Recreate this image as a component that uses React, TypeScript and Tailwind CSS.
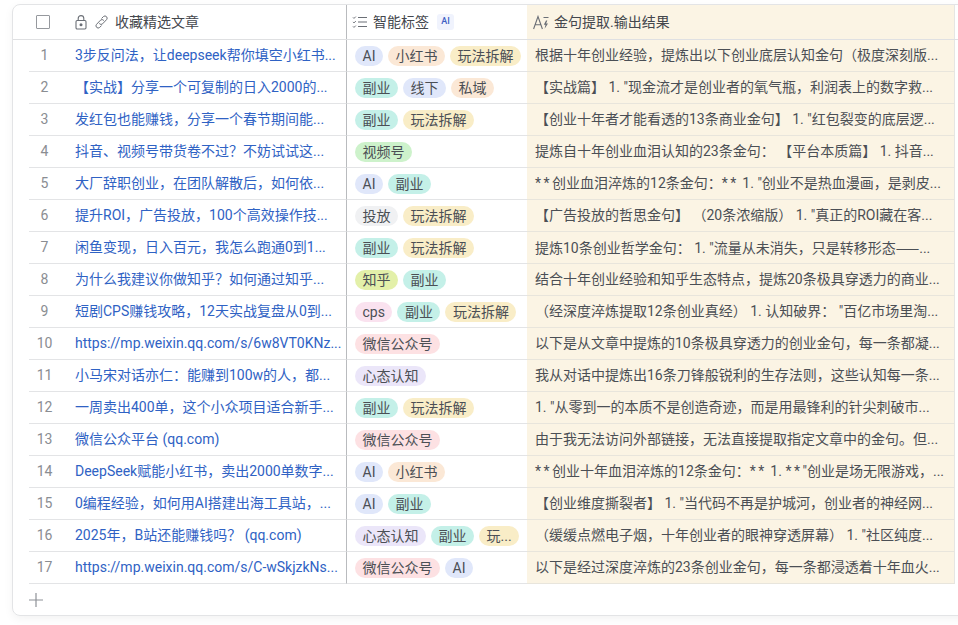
import React from "react";

type Tag = "AI" | "小红书" | "玩法拆解" | "副业" | "线下" | "私域" | "视频号" | "投放" | "知乎" | "cps" | "微信公众号" | "心态认知" | "玩...";

const tagColors: Record<Tag, string> = {
  AI: "bg-[#e0e7fa]",
  小红书: "bg-[#fbe8d6]",
  玩法拆解: "bg-[#f9edc7]",
  "玩...": "bg-[#f9edc7]",
  副业: "bg-[#c4f0e8]",
  线下: "bg-[#e0e7fa]",
  私域: "bg-[#fbe8d6]",
  视频号: "bg-[#cdf2cb]",
  投放: "bg-[#f0f1f3]",
  知乎: "bg-[#e3f0a9]",
  cps: "bg-[#fae2ef]",
  微信公众号: "bg-[#fde1e3]",
  心态认知: "bg-[#ebe6f9]",
};

const rows: { title: string; tags: Tag[]; result: string }[] = [
  { title: "3步反问法，让deepseek帮你填空小红书...", tags: ["AI", "小红书", "玩法拆解"], result: "根据十年创业经验，提炼出以下创业底层认知金句（极度深刻版..." },
  { title: "【实战】分享一个可复制的日入2000的...", tags: ["副业", "线下", "私域"], result: "【实战篇】 1. \"现金流才是创业者的氧气瓶，利润表上的数字救..." },
  { title: "发红包也能赚钱，分享一个春节期间能...", tags: ["副业", "玩法拆解"], result: "【创业十年者才能看透的13条商业金句】 1. \"红包裂变的底层逻..." },
  { title: "抖音、视频号带货卷不过？不妨试试这...", tags: ["视频号"], result: "提炼自十年创业血泪认知的23条金句： 【平台本质篇】 1. 抖音..." },
  { title: "大厂辞职创业，在团队解散后，如何依...", tags: ["AI", "副业"], result: "**创业血泪淬炼的12条金句：** 1. \"创业不是热血漫画，是剥皮..." },
  { title: "提升ROI，广告投放，100个高效操作技...", tags: ["投放", "玩法拆解"], result: "【广告投放的哲思金句】 （20条浓缩版） 1. \"真正的ROI藏在客..." },
  { title: "闲鱼变现，日入百元，我怎么跑通0到1...", tags: ["副业", "玩法拆解"], result: "提炼10条创业哲学金句： 1. \"流量从未消失，只是转移形态——..." },
  { title: "为什么我建议你做知乎？如何通过知乎...", tags: ["知乎", "副业"], result: "结合十年创业经验和知乎生态特点，提炼20条极具穿透力的商业..." },
  { title: "短剧CPS赚钱攻略，12天实战复盘从0到...", tags: ["cps", "副业", "玩法拆解"], result: "（经深度淬炼提取12条创业真经） 1. 认知破界： \"百亿市场里淘..." },
  { title: "https://mp.weixin.qq.com/s/6w8VT0KNz...", tags: ["微信公众号"], result: "以下是从文章中提炼的10条极具穿透力的创业金句，每一条都凝..." },
  { title: "小马宋对话亦仁：能赚到100w的人，都...", tags: ["心态认知"], result: "我从对话中提炼出16条刀锋般锐利的生存法则，这些认知每一条..." },
  { title: "一周卖出400单，这个小众项目适合新手...", tags: ["副业", "玩法拆解"], result: "1. \"从零到一的本质不是创造奇迹，而是用最锋利的针尖刺破市..." },
  { title: "微信公众平台 (qq.com)", tags: ["微信公众号"], result: "由于我无法访问外部链接，无法直接提取指定文章中的金句。但..." },
  { title: "DeepSeek赋能小红书，卖出2000单数字...", tags: ["AI", "小红书"], result: "**创业十年血泪淬炼的12条金句：** 1. **\"创业是场无限游戏，..." },
  { title: "0编程经验，如何用AI搭建出海工具站，...", tags: ["AI", "副业"], result: "【创业维度撕裂者】 1. \"当代码不再是护城河，创业者的神经网..." },
  { title: "2025年，B站还能赚钱吗？ (qq.com)", tags: ["心态认知", "副业", "玩..."], result: "（缓缓点燃电子烟，十年创业者的眼神穿透屏幕） 1. \"社区纯度..." },
  { title: "https://mp.weixin.qq.com/s/C-wSkjzkNs...", tags: ["微信公众号", "AI"], result: "以下是经过深度淬炼的23条创业金句，每一条都浸透着十年血火..." },
];

const LockIcon = () => (
  <svg width="12" height="15" viewBox="0 0 12 15" fill="none" stroke="#6b6f76" strokeWidth="1.1">
    <rect x="1" y="5.5" width="10" height="8.5" rx="1.2" />
    <path d="M3.2 5.5V3.4a2.8 2.8 0 0 1 5.6 0v2.1" />
    <circle cx="6" cy="9.7" r="1.5" fill="#6b6f76" stroke="none" />
  </svg>
);

const LinkIcon = () => (
  <svg width="13" height="14" viewBox="0 0 13 14" fill="none" stroke="#6b6f76" strokeWidth="1" strokeLinecap="round">
    <path d="M6.8 3.2l1.7-1.7a2.2 2.2 0 0 1 3.1 3.1L7.6 8.8a2.2 2.2 0 0 1-3.1 0" />
    <path d="M6.3 10.8l-1.7 1.7a2.2 2.2 0 0 1-3.1-3.1l4-4.2a2.2 2.2 0 0 1 3.1 0" />
  </svg>
);

const ListIcon = () => (
  <svg width="15" height="14" viewBox="0 0 15 14" fill="none" stroke="#6b6f76" strokeWidth="1.1">
    <path d="M6 2.5h9M6 7h9M6 11.5h9" />
    <path d="M1 2.4l1 1 1.8-1.8M1 6.9l1 1 1.8-1.8M1 11.4l1 1 1.8-1.8" strokeWidth="1" />
  </svg>
);

const AiTextIcon = () => (
  <svg width="16" height="15" viewBox="0 0 16 15" fill="none" stroke="#6b6f76" strokeWidth="1.1">
    <path d="M0.6 14L5 1.5 9.4 14M2.2 9.8h5.6" />
    <path d="M10.5 2.5h5" />
    <path d="M13 5.5l-2.2 4.3h1.7l-.9 4 3.4-5.2h-1.9l1.2-3.1z" fill="#6b6f76" stroke="none" />
  </svg>
);

const Pill = ({ tag }: { tag: Tag }) => (
  <span className={`${tagColors[tag]} h-5 leading-5 px-[7.5px] rounded-full text-[#4b4f55] whitespace-nowrap shrink-0`}>
    {tag}
  </span>
);

// the asterisks and dashes sit wider in the original font
const ResultText = ({ text }: { text: string }) => (
  <>
    {text.split(/(\*\*|——)/).map((part, i) =>
      part === "**" ? (
        <span key={i} className="tracking-[2.5px]">{part}</span>
      ) : part === "——" ? (
        <span key={i} className="font-['Noto_Sans_CJK_SC',sans-serif]">{part}</span>
      ) : (
        part
      )
    )}
  </>
);

export default function App() {
  return (
    <div className="w-[958px] h-[625px] bg-white overflow-hidden pt-1 pl-3 font-['Roboto','Noto_Sans_CJK_SC',sans-serif] text-[14px]">
      <div className="w-[960px] h-[612px] border border-[#e3e4e6] rounded-lg shadow-[0_3px_10px_rgba(0,0,0,0.05)] overflow-hidden">
        <div className="flex h-[35px] border-b border-[#dfe0e2] text-[#44474d]">
          <div className="w-[54px] shrink-0 flex items-center pl-[23px]">
            <span className="w-[14px] h-[14px] border-[1.5px] border-[#96999e] rounded-[1px]" />
          </div>
          <div className="w-[280px] shrink-0 flex items-center gap-[8px] pl-[8px] border-r border-[#b9bbbe]">
            <LockIcon />
            <LinkIcon />
            <span className="-ml-[1px]">收藏精选文章</span>
          </div>
          <div className="w-[180px] shrink-0 flex items-center gap-[6px] pl-[5px]">
            <ListIcon />
            <span>智能标签</span>
            <span className="ml-[2px] w-[17px] h-[16px] flex items-center justify-center bg-[#f0f3fd] rounded-[3px] text-[9px] font-medium text-[#3d5fc4]">AI</span>
          </div>
          <div className="w-[428px] shrink-0 flex items-center gap-[5px] pl-[6px] bg-[#fbf4e4] border-r border-[#e6e6e3]">
            <AiTextIcon />
            <span>金句提取.输出结果</span>
          </div>
        </div>
        {rows.map((row, i) => (
          <div key={i} className="flex h-8">
            <div className="w-[16px] shrink-0" />
            <div className="w-[38px] shrink-0 flex items-center justify-center pr-[7px] text-[#8a8d92] border-b border-[#e3e4e6]">
              {i + 1}
            </div>
            <div className="w-[280px] shrink-0 flex items-center pl-[8px] text-[#2f62c4] whitespace-nowrap overflow-hidden border-b border-[#e3e4e6] border-r border-r-[#b9bbbe]">
              {row.title}
            </div>
            <div className="w-[180px] shrink-0 flex items-center gap-[5px] pl-[8px] overflow-hidden border-b border-[#e3e4e6]">
              {row.tags.map((t) => (
                <Pill key={t} tag={t} />
              ))}
            </div>
            <div className="w-[428px] shrink-0 pl-[8px] leading-[31px] text-[#4b4f55] whitespace-nowrap overflow-hidden bg-[#fbf4e4] border-r border-[#e6e6e3] border-b border-b-[#e8e5dc]">
              <ResultText text={row.result} />
            </div>
          </div>
        ))}
        <div className="flex items-center h-8 pl-[16px]">
          <svg width="14" height="14" viewBox="0 0 14 14" stroke="#8e9197" strokeWidth="1.2">
            <path d="M7 0v14M0 7h14" />
          </svg>
        </div>
      </div>
    </div>
  );
}
